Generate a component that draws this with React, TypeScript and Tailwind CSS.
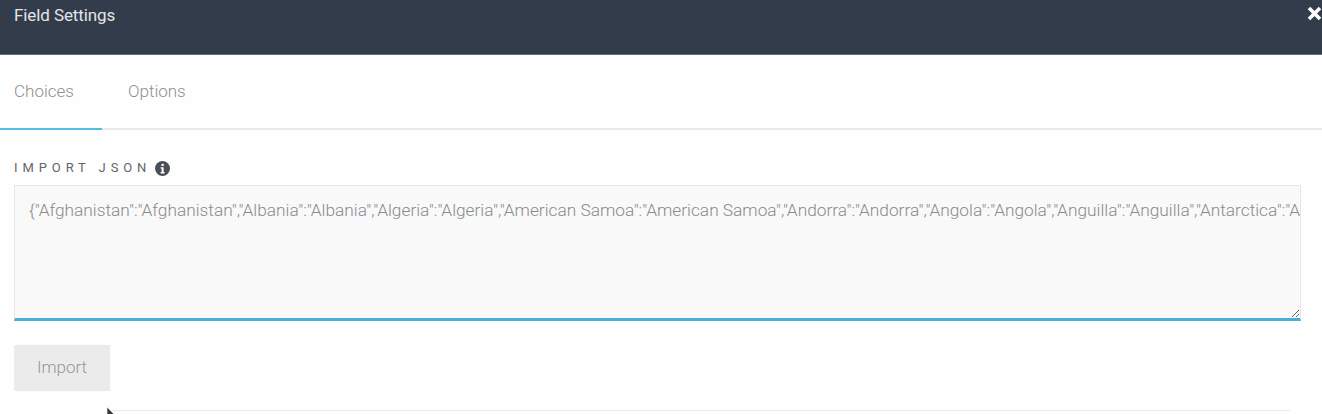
const json =
  '{"Afghanistan":"Afghanistan","Albania":"Albania","Algeria":"Algeria","American Samoa":"American Samoa","Andorra":"Andorra","Angola":"Angola","Anguilla":"Anguilla","Antarctica":"Antarctica","Antigua and Barbuda":"Antigua and Barbuda"}';

function InfoIcon() {
  return (
    <svg width="15" height="15" viewBox="0 0 16 16" className="ml-[4px]">
      <circle cx="8" cy="8" r="8" fill="#4a4f55" />
      <rect x="6.9" y="3" width="2.4" height="2.3" fill="#fff" />
      <path d="M6 6.6h3.2v5.2h1v1.4H6v-1.4h1V8H6z" fill="#fff" />
    </svg>
  );
}

export default function App() {
  return (
    <div className="relative h-[414px] w-[1322px] overflow-hidden bg-[#fefefe] font-['Roboto',sans-serif] font-light">
      <header className="flex h-[55px] items-start justify-between border-b border-[#6b6f7a] bg-[#323c4b] pl-[14px]">
        <h1 className="pt-[5px] text-[17px] leading-[20px] font-normal tracking-[-0.1px] text-[#e4e5e7]">Field Settings</h1>
        <svg width="15" height="15" viewBox="0 0 15 15" className="mt-[6px]">
          <path d="M2 2l11 11M13 2L2 13" stroke="#fff" strokeWidth="3.6" />
        </svg>
      </header>

      <nav className="flex h-[75px] border-b-2 border-[#e8e8e8] text-[17px] text-[#8f8f8f]">
        <div className="-mb-[2px] flex w-[102px] items-center border-b-2 border-[#55bde0] pl-[14px]">Choices</div>
        <div className="flex items-center pl-[26px]">Options</div>
      </nav>

      <main className="px-[14px] pt-[30px]">
        <div className="flex h-[16px] items-center text-[13px] font-normal tracking-[4.9px] text-[#666]">
          IMPORT JSON
          <InfoIcon />
        </div>
        <textarea
          readOnly
          value={json}
          wrap="off"
          className="mt-[9px] block h-[136px] w-[1287px] overflow-hidden border border-b-[3px] border-[#e6e6e6] border-b-[#4aaed6] bg-[#f9f9f9] pt-[14px] pr-0 pl-[14px] text-[17.3px] leading-[20px] font-light text-[#8a8a8a] outline-none"
        />
        <button className="mt-[24px] block h-[46px] w-[96px] bg-[#ebebeb] text-[17px] text-[#969696]">Import</button>
      </main>

      <div className="absolute right-[32px] bottom-[3px] left-[112px] h-px bg-[#ececec]" />
      <svg width="12" height="16" viewBox="0 0 12 16" className="absolute top-[406px] left-[106px]">
        <path d="M1 1v13l3.2-3 2.2 4.6 2-1-2.2-4.4H10z" fill="#3a3a3a" stroke="#fff" strokeWidth="0.6" />
      </svg>
    </div>
  );
}
